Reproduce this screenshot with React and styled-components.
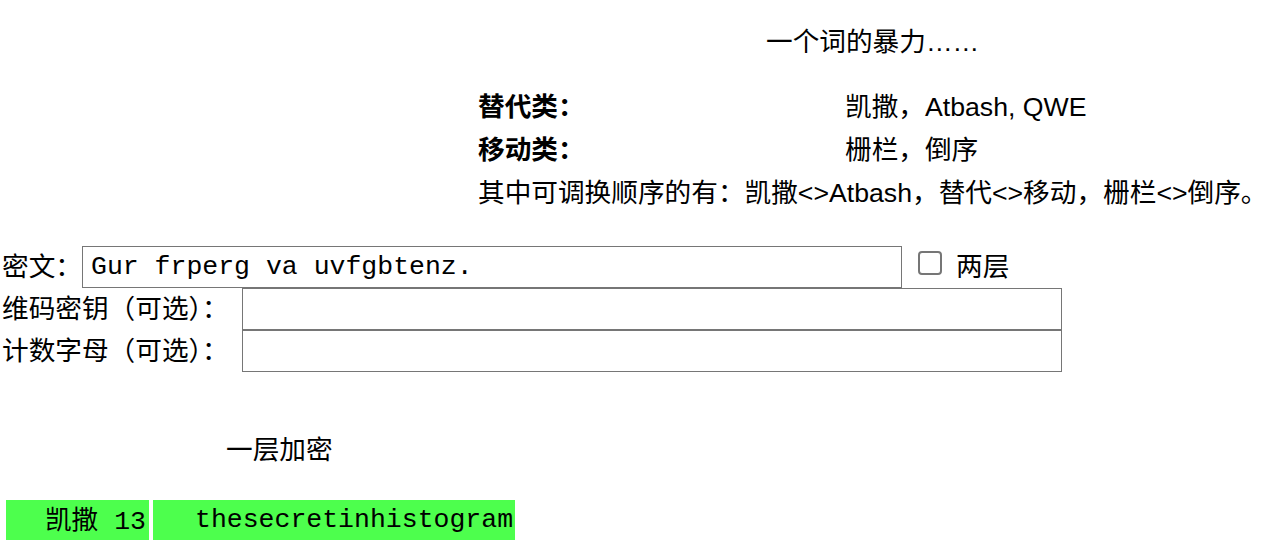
import React from 'react';
import styled, { createGlobalStyle } from 'styled-components';

const sans = `"Liberation Sans", "Noto Sans CJK SC", sans-serif`;
const mono = `"Liberation Mono", "Noto Sans CJK SC", monospace`;

export default function App() {
	return (
		<>
			<GlobalStyle />
			<Page>
				<Title>一个词的暴力……</Title>

				<InfoTable>
					<Label>替代类：</Label>
					<Value>凯撒，Atbash, QWE</Value>
					<Label>移动类：</Label>
					<Value>栅栏，倒序</Value>
					<Note>其中可调换顺序的有：凯撒&lt;&gt;Atbash，替代&lt;&gt;移动，栅栏&lt;&gt;倒序。</Note>
				</InfoTable>

				<Form>
					<FieldRow>
						<FieldLabel $width="80px">密文：</FieldLabel>
						<TextInput defaultValue="Gur frperg va uvfgbtenz." />
						<CheckLabel>
							<Check type="checkbox" />
							两层
						</CheckLabel>
					</FieldRow>
					<FieldRow>
						<FieldLabel $width="240px">维码密钥（可选）：</FieldLabel>
						<TextInput />
					</FieldRow>
					<FieldRow>
						<FieldLabel $width="240px">计数字母（可选）：</FieldLabel>
						<TextInput />
					</FieldRow>
				</Form>

				<SectionTitle>一层加密</SectionTitle>

				<ResultRow>
					<MethodCell>
						凯撒<Shift>13</Shift>
					</MethodCell>
					<PlainCell>thesecretinhistogram</PlainCell>
				</ResultRow>
			</Page>
		</>
	);
}

/* STYLES */
const GlobalStyle = createGlobalStyle`
	body {
		margin: 0;
		background: #fff;
		color: #000;
		font-family: ${sans};
	}
`;

const Page = styled.div`
	font-size: 26.67px;
	line-height: 40px;
`;

const Title = styled.div`
	padding: 22px 0 0 766px;
	height: 40px;
`;

const InfoTable = styled.div`
	display: grid;
	grid-template-columns: 367px auto;
	grid-auto-rows: 43px;
	align-items: center;
	margin: 23px 0 0 478px;
`;

const Label = styled.div`
	font-weight: bold;
`;

const Value = styled.div``;

const Note = styled.div`
	grid-column: 1 / span 2;
	white-space: nowrap;
`;

const Form = styled.div`
	margin-top: 32px;
	padding-left: 2px;
`;

const FieldRow = styled.div`
	display: flex;
	align-items: center;
	height: 42px;
`;

const FieldLabel = styled.span`
	flex: none;
	width: ${props => props.$width};
	white-space: nowrap;
`;

const TextInput = styled.input`
	box-sizing: border-box;
	width: 820px;
	height: 42px;
	margin: 0;
	padding: 0 8px;
	border: 1px solid #767676;
	border-radius: 0;
	font-family: ${mono};
	font-size: 26.5px;
	color: #000;
	background: #fff;
	outline: none;
`;

const CheckLabel = styled.label`
	display: flex;
	align-items: center;
	gap: 14px;
	margin-left: 16px;
`;

const Check = styled.input`
	appearance: none;
	width: 24px;
	height: 24px;
	margin: 0;
	border: 2px solid #767676;
	border-radius: 4px;
	background: #fff;
	box-sizing: border-box;
	position: relative;
	top: -4px;
`;

const SectionTitle = styled.div`
	margin-top: 58px;
	padding-left: 226px;
`;

const ResultRow = styled.div`
	display: flex;
	gap: 4px;
	margin-top: 30px;
	padding-left: 6px;
`;

const Cell = styled.div`
	box-sizing: border-box;
	height: 40px;
	background: #4dff4d;
	white-space: pre;
`;

const MethodCell = styled(Cell)`
	width: 143px;
	text-align: right;
	padding-right: 3px;
`;

const Shift = styled.span`
	font-family: ${mono};
	font-size: 26.5px;
	margin-left: 16px;
`;

const PlainCell = styled(Cell)`
	width: 362px;
	padding-left: 42px;
	font-family: ${mono};
	font-size: 26.5px;
`;
/* END STYLES */
